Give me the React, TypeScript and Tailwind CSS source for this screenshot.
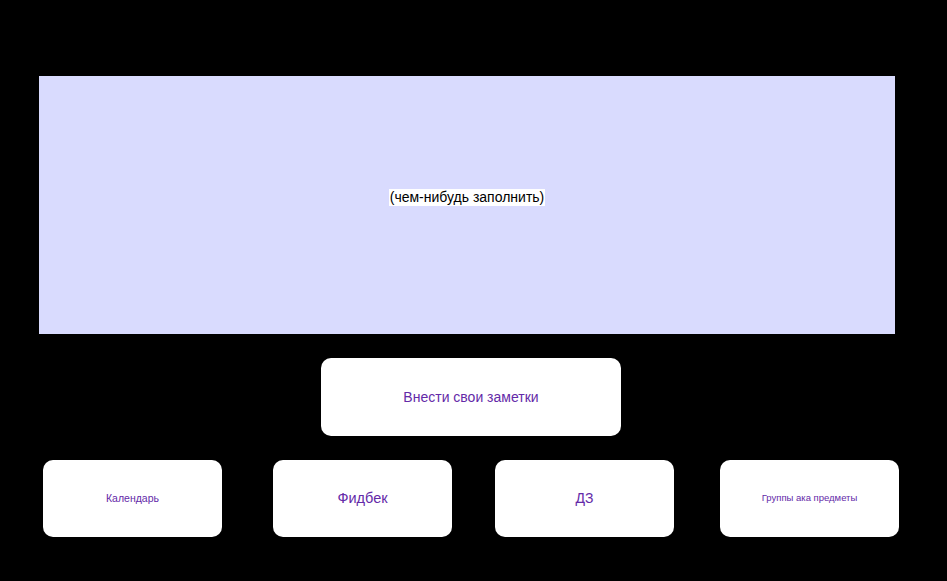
export default function App() {
  const cards = [
    { label: "Календарь", size: "text-[10.5px]", ml: "ml-[43px]" },
    { label: "Фидбек", size: "text-[14.5px]", ml: "ml-[51px]" },
    { label: "ДЗ", size: "text-[14px]", ml: "ml-[43px]" },
    { label: "Группы ака предметы", size: "text-[9.5px]", ml: "ml-[46px]" },
  ];

  return (
    <div className="w-[947px] h-[581px] bg-black overflow-hidden font-['Liberation_Sans',Arial,sans-serif]">
      {/* верхняя панель */}
      <div className="pt-[76px] pl-[39px]">
        <div className="w-[856px] h-[258px] bg-[#d9dbfe] flex items-center justify-center pb-[15px]">
          <span className="bg-white text-black text-[14px] leading-[17px] px-[1px]">
            (чем-нибудь заполнить)
          </span>
        </div>
      </div>

      {/* заметки */}
      <div className="mt-[24px] pl-[321px]">
        <button className="w-[300px] h-[78px] bg-white rounded-[10px] flex items-center justify-center pt-[1px] text-[14px] text-[#642aa8]">
          Внести свои заметки
        </button>
      </div>

      {/* разделы */}
      <div className="mt-[24px] flex">
        {cards.map((c) => (
          <button
            key={c.label}
            className={`${c.ml} w-[179px] h-[77px] bg-white rounded-[10px] flex items-center justify-center text-[#642aa8] ${c.size}`}
          >
            {c.label}
          </button>
        ))}
      </div>
    </div>
  );
}
